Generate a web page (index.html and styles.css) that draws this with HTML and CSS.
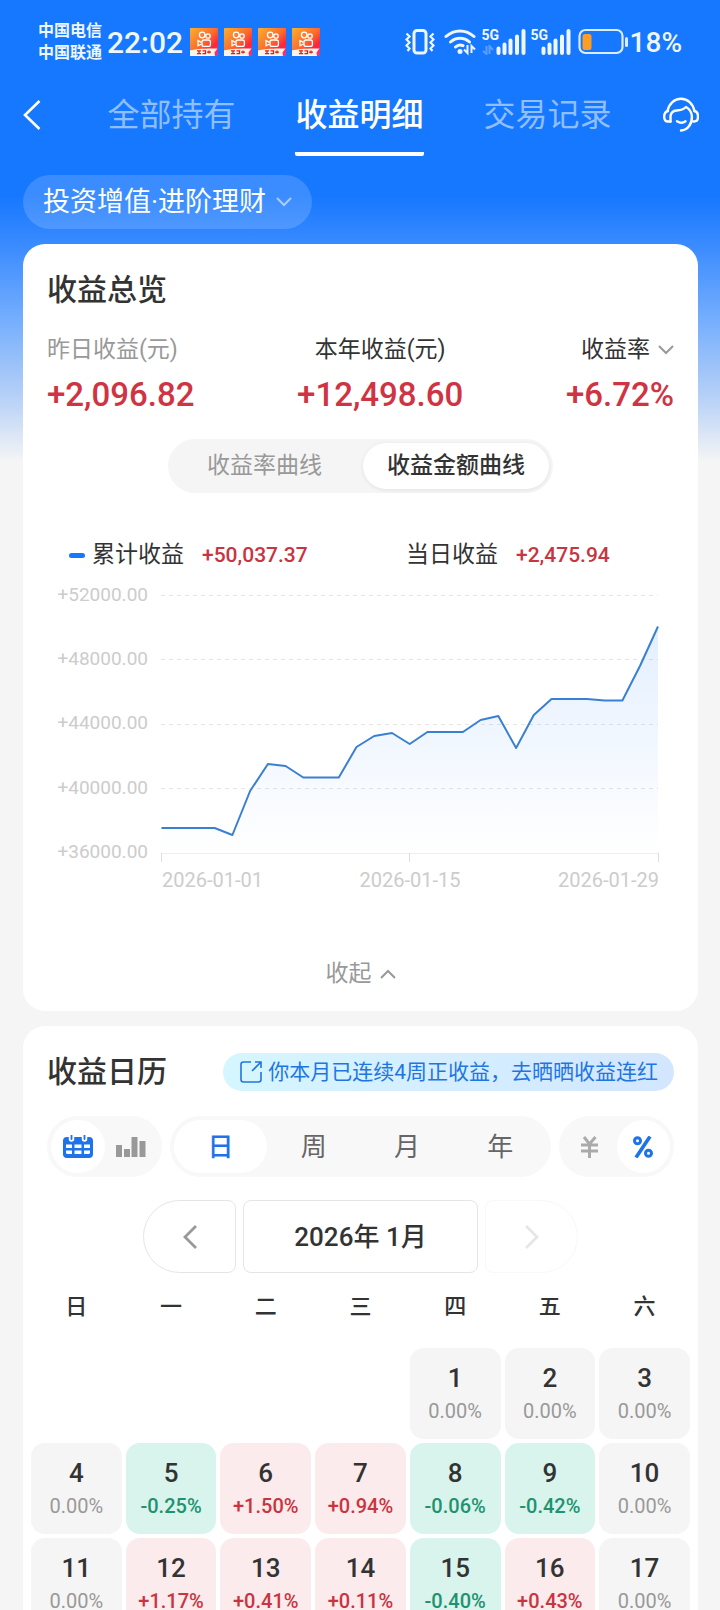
FILE: index.html
```html
<!DOCTYPE html>
<html lang="zh-CN">
<head>
<meta charset="utf-8">
<meta name="viewport" content="width=device-width, initial-scale=1">
<title>收益明细</title>
<link rel="stylesheet" href="styles.css">
</head>
<body>
<svg class="defs" aria-hidden="true">
  <defs>
    <linearGradient id="appBg" x1="0" y1="0" x2="1" y2="1">
      <stop offset="0" stop-color="#fcb02c"/><stop offset="0.5" stop-color="#fb6a2e"/><stop offset="0.75" stop-color="#f9263c"/><stop offset="1" stop-color="#e8359a"/>
    </linearGradient>
    <symbol id="app" viewBox="0 0 28 28">
      <rect width="28" height="28" rx="1" fill="url(#appBg)"/>
      <g fill="none" stroke="#fff" stroke-width="1.3">
        <circle cx="12.2" cy="7" r="2.8"/><circle cx="18" cy="8" r="2.2"/>
        <rect x="12" y="12" width="8.4" height="6.4" rx="2"/>
        <path d="M11.5 14.4 8 12.6v5.2l3.5-1.8"/>
      </g>
      <path d="M0 22.5c5-1.8 18-2.4 27.5-2l-3 4 .5 3.5H0z" fill="#fff3e4"/>
      <path d="M7 22.8h4m-2 0v2.8m-2 0h4m1.5-2.8h3v2.8h-3m4.500-1.400h4m-2-1.800v3.200" fill="none" stroke="#d8201c" stroke-width="1.300"/>
    </symbol>
    <symbol id="down" viewBox="0 0 16 10"><path d="M1 1l7 7 7-7" fill="none" stroke="currentColor" stroke-width="2"/></symbol>
    <symbol id="bars" viewBox="0 0 30 26">
      <path d="M2.500 19.500v4.500M8.500 15.500v8.500M14.500 11.500v12.500M21 7.500v16.500M27.500 2v22" fill="none" stroke="#eef6ff" stroke-width="4" stroke-linecap="round"/>
    </symbol>
  </defs>
</svg>
<div class="app">
  <div class="status">
    <div class="status-side">
      <div class="carriers"><span>中国电信</span><span>中国联通</span></div>
      <time class="clock">22:02</time>
      <div class="notices">
        <svg><use href="#app"/></svg><svg><use href="#app"/></svg><svg><use href="#app"/></svg><svg><use href="#app"/></svg>
      </div>
    </div>
    <div class="status-side">
      <svg class="vibrate" viewBox="0 0 30 28" fill="none" stroke="#eef6ff" stroke-width="2.200">
        <rect x="9" y="2.500" width="12" height="22.500" rx="3" stroke-width="3"/>
        <path d="M1.500 5.500l3 3-3 3 3 3-3 3 3 3-2 2.500M28.500 5.500l-3 3 3 3-3 3 3 3-3 3 2 2.500"/>
      </svg>
      <svg class="wifi" viewBox="0 0 32 28" fill="none" stroke="#eef6ff" stroke-width="3" stroke-linecap="round">
        <path d="M2 8.500c8-7.500 20-7.500 28 0M6.500 14c5.500-5 13.500-5 19 0M11.500 19c2-2 5-2.500 7.500-1.300"/>
        <circle cx="16" cy="23.500" r="2.500" fill="#eef6ff" stroke="none"/>
        <path d="M23.500 17v8l-3.500-3.500M27.500 25v-7l3.500 3.500" stroke-width="2" stroke-linecap="butt"/>
      </svg>
      <div class="signal">
        <span>5G</span>
        <svg class="data" viewBox="0 0 12 10"><path d="M4.500 1v8L1 6M7.500 9V1L11 5" fill="none" stroke="#5c9fff" stroke-width="2"/></svg>
        <svg class="bars"><use href="#bars"/></svg>
      </div>
      <div class="signal signal-b">
        <span>5G</span>
        <svg class="bars"><use href="#bars"/></svg>
      </div>
      <svg class="battery" viewBox="0 0 52 28">
        <rect x="1.500" y="2" width="43" height="23" rx="6" fill="none" stroke="#dcecff" stroke-width="2.200"/>
        <rect x="4.500" y="6" width="9" height="16" rx="2.500" fill="#ff9c22"/>
        <path d="M48.500 10.500v7" stroke="#dcecff" stroke-width="3" stroke-linecap="round"/>
      </svg>
      <span class="charge">18%</span>
    </div>
  </div>

  <header class="nav">
    <button class="icon-btn" type="button" aria-label="返回">
      <svg class="back" viewBox="0 0 18 32"><path d="M16.500 2 2 16l14.500 14" fill="none" stroke="#fff" stroke-width="2.600"/></svg>
    </button>
    <nav class="tabs">
      <a href="#holdings">全部持有</a>
      <a href="#details" class="on" aria-current="page">收益明细</a>
      <a href="#records">交易记录</a>
    </nav>
    <button class="icon-btn" type="button" aria-label="客服">
      <svg class="support" viewBox="0 0 36 36" fill="none" stroke="#fff" stroke-width="2.400" stroke-linecap="round" stroke-linejoin="round">
        <path d="M4.500 14C6 6.500 11.500 1.800 18 1.800S30 6.500 31.500 14"/>
        <path d="M7.500 24.500H5c-2.500 0-3.800-1.800-3.800-4.800S2.500 14.500 5 14"/>
        <path d="M31.500 14c2.500.500 3.500 2.700 3.500 5.700s-1.300 4.800-3.800 4.800h-1"/>
        <path d="M7.500 24.500V19c.500-3.500 2.500-5.200 6-5.500 4.500-.300 7.500-1.500 9.500-3.500 3.500 2 5.700 5.500 5.900 9.500.300 7-4 13.800-10.900 14"/>
        <path d="M14 24.200c3 1.900 6 1.900 8.500 0"/>
      </svg>
    </button>
  </header>

  <button class="filter" type="button">投资增值·进阶理财<svg class="chev"><use href="#down"/></svg></button>

  <main>
    <section class="card overview">
      <h2>收益总览</h2>
      <div class="metrics">
        <div class="metric muted"><p>昨日收益(元)</p><strong>+2,096.82</strong></div>
        <div class="metric center"><p>本年收益(元)</p><strong>+12,498.60</strong></div>
        <div class="metric right"><p>收益率<svg class="chev"><use href="#down"/></svg></p><strong>+6.72%</strong></div>
      </div>
      <div class="switch">
        <button type="button">收益率曲线</button>
        <button type="button" class="on" aria-pressed="true">收益金额曲线</button>
      </div>
      <div class="legend">
        <div><i></i>累计收益<b>+50,037.37</b></div>
        <div>当日收益<b>+2,475.94</b></div>
      </div>
      <svg class="chart" viewBox="0 0 627 329" role="img" aria-label="累计收益曲线">
        <defs>
          <linearGradient id="area" gradientUnits="userSpaceOnUse" x1="0" y1="55" x2="0" y2="282">
            <stop offset="0" stop-color="#1677ff" stop-opacity="0.120"/><stop offset="1" stop-color="#1677ff" stop-opacity="0"/>
          </linearGradient>
        </defs>
        <path class="grid" d="M114 24.500H611M114 88.500H611M114 153.500H611M114 217.500H611M114 282.500H611"/>
        <path class="axis" d="M114 282.500H611"/>
        <path class="ticks" d="M114.500 282v9M362.500 282v9M611.500 282v9"/>
        <path fill="url(#area)" d="M114.500 257H167.700L185.400 264 203.100 220 220.900 193 238.600 195 256.300 206.500H291.800L309.500 176 327.200 165 345 162 362.700 173 380.400 161H415.900L433.600 149 451.300 145 469.100 177 486.800 144 504.500 128H540L557.700 129.500H575.400L593.200 94.500 611 55.500V282H114.500z"/>
        <path class="line" d="M114.500 257H167.700L185.400 264 203.100 220 220.900 193 238.600 195 256.300 206.500H291.800L309.500 176 327.200 165 345 162 362.700 173 380.400 161H415.900L433.600 149 451.300 145 469.100 177 486.800 144 504.500 128H540L557.700 129.500H575.400L593.200 94.500 611 55.500"/>
        <g class="y-labels">
          <text x="101" y="30">+52000.00</text><text x="101" y="94">+48000.00</text><text x="101" y="158">+44000.00</text><text x="101" y="223">+40000.00</text><text x="101" y="287">+36000.00</text>
        </g>
        <g class="x-labels">
          <text x="115" y="316">2026-01-01</text><text x="363" y="316" text-anchor="middle">2026-01-15</text><text x="612" y="316" text-anchor="end">2026-01-29</text>
        </g>
      </svg>
      <button class="fold" type="button">收起<svg class="chev up"><use href="#down"/></svg></button>
    </section>

    <section class="card calendar">
      <div class="cal-head">
        <h2>收益日历</h2>
        <a class="share" href="#share">
          <svg viewBox="0 0 24 24" fill="none" stroke="#1f76e0" stroke-width="1.600"><path d="M12 2H4.500A2.500 2.500 0 0 0 2 4.500v15A2.500 2.500 0 0 0 4.500 22h15a2.500 2.500 0 0 0 2.500-2.500V12M16 2h6v6M22 2l-9 9"/></svg>
          <span>你本月已连续4周正收益，去晒晒收益连红</span></a>
      </div>
      <div class="controls">
        <div class="group small">
          <button type="button" class="on" aria-label="日历视图">
            <svg class="cal-icon" viewBox="0 0 30 24">
              <rect y="2" width="30" height="21" rx="4" fill="#1f73ea"/>
              <path d="M8.500 0v4M21.500 0v4" stroke="#fff" stroke-width="5.500" stroke-linecap="round"/>
              <path d="M8.500 0v4M21.500 0v4" stroke="#1f73ea" stroke-width="1.800" stroke-linecap="round"/>
              <path fill="#fff" d="M3 9.500h6v3.500H3zM11.500 9.500h7v3.500h-7zM21 9.500h6v3.500h-6zM3 15.500h6V19H4.500Q3 19 3 17.500zM11.500 15.500h7V19h-7zM21 15.500h6v2q0 1.500-1.500 1.500H21z"/>
            </svg>
          </button>
          <button type="button" aria-label="柱状图视图">
            <svg class="bar-icon" viewBox="0 0 30 20" fill="#999"><path d="M0 8h6v12H0zM8 12h6v8H8zM15.500 0h6v20h-6zM23.500 4h6v16h-6z"/></svg>
          </button>
        </div>
        <div class="group wide">
          <button type="button" class="on">日</button><button type="button">周</button><button type="button">月</button><button type="button">年</button>
        </div>
        <div class="group small">
          <button type="button" aria-label="金额">
            <svg class="unit" viewBox="0 0 20 22" fill="none" stroke="#aaa" stroke-width="3"><path d="M4 1l5.500 7L15.500 1M1 9h17M1 15h17M9.500 8v14"/></svg>
          </button>
          <button type="button" class="on" aria-label="百分比">
            <svg class="unit" viewBox="0 0 20 22" fill="none" stroke="#1f73ea" stroke-width="3"><circle cx="4.500" cy="4.800" r="3"/><circle cx="15.500" cy="17.200" r="3"/><path d="M17 .500 3 21.500" stroke-width="3.600"/></svg>
          </button>
        </div>
      </div>
      <div class="month">
        <button type="button" class="prev" aria-label="上个月"><svg viewBox="0 0 14 24"><path d="M13 1 2 12l11 11" fill="none" stroke="#999" stroke-width="2.800"/></svg></button>
        <button type="button" class="now">2026年 1月</button>
        <button type="button" class="next" aria-label="下个月" disabled><svg viewBox="0 0 14 24"><path d="M1 1l11 11L1 23" fill="none" stroke="#e6e6e6" stroke-width="2.800"/></svg></button>
      </div>
      <table>
        <thead><tr><th>日</th><th>一</th><th>二</th><th>三</th><th>四</th><th>五</th><th>六</th></tr></thead>
        <tbody>
          <tr>
            <td class="empty"></td><td class="empty"></td><td class="empty"></td><td class="empty"></td>
            <td><b>1</b><span>0.00%</span></td><td><b>2</b><span>0.00%</span></td><td><b>3</b><span>0.00%</span></td>
          </tr>
          <tr>
            <td><b>4</b><span>0.00%</span></td><td class="loss"><b>5</b><span>-0.25%</span></td><td class="gain"><b>6</b><span>+1.50%</span></td><td class="gain"><b>7</b><span>+0.94%</span></td><td class="loss"><b>8</b><span>-0.06%</span></td><td class="loss"><b>9</b><span>-0.42%</span></td><td><b>10</b><span>0.00%</span></td>
          </tr>
          <tr>
            <td><b>11</b><span>0.00%</span></td><td class="gain"><b>12</b><span>+1.17%</span></td><td class="gain"><b>13</b><span>+0.41%</span></td><td class="gain"><b>14</b><span>+0.11%</span></td><td class="loss"><b>15</b><span>-0.40%</span></td><td class="gain"><b>16</b><span>+0.43%</span></td><td><b>17</b><span>0.00%</span></td>
          </tr>
        </tbody>
      </table>
    </section>
  </main>
</div>
</body>
</html>
```
FILE: styles.css
```css
* { box-sizing: border-box; }
body, h2, p { margin: 0; }
body {
  font-family: Roboto, "Noto Sans CJK SC", sans-serif;
  color: #333;
  background: #f5f5f5;
}
button { font: inherit; color: inherit; border: 0; padding: 0; background: none; }
a { color: inherit; text-decoration: none; }
svg { display: block; flex: none; }
.defs { position: absolute; width: 0; height: 0; }

.app {
  height: 100vh;
  overflow-y: auto;
  scrollbar-width: none;
  background: linear-gradient(#1677ff 0, #1677ff 195px, #3a8bff 245px, #75aefd 320px, #b9d2f7 400px, #f5f5f5 462px) no-repeat #f5f5f5;
}

/* status bar */
.status {
  height: 84px;
  padding: 0 38px;
  display: flex;
  justify-content: space-between;
  align-items: center;
  color: #eef6ff;
}
.status-side { display: flex; align-items: center; }
.carriers { display: flex; flex-direction: column; font-size: 16px; line-height: 22px; font-weight: 700; }
.clock { font-size: 30px; font-weight: 500; margin: 0 7px 0 5px; }
.notices { display: flex; gap: 6px; }
.notices svg { width: 28px; height: 28px; }
.vibrate { width: 30px; height: 28px; margin-right: 9px; }
.wifi { width: 32px; height: 28px; margin-right: 6px; }
.signal { display: grid; grid-template: 13px 13px / 14px 28px; width: 42px; margin-right: 7px; }
.signal-b { width: 38px; margin-right: 9px; grid-template-columns: 10px 28px; }
.signal span { grid-area: 1 / 1; font-size: 14px; line-height: 13px; font-weight: 700; }
.signal .data { grid-area: 2 / 1; width: 12px; height: 10px; align-self: end; }
.signal .bars { grid-area: 1 / 2 / 3 / 3; width: 30px; height: 26px; }
.battery { width: 52px; height: 28px; }
.charge { font-size: 28px; font-weight: 500; }

/* navigation */
.nav { display: flex; justify-content: space-between; align-items: flex-start; padding: 7px 21px 0 23px; color: #fff; }
.icon-btn { height: 48px; display: flex; align-items: center; }
.back { width: 18px; height: 32px; }
.support { width: 36px; height: 36px; }
.tabs { display: flex; gap: 60px; margin-left: 15px; font-size: 32px; line-height: 48px; }
.tabs a { padding-bottom: 13px; color: #8fbfff; border-bottom: 4px solid transparent; }
.tabs .on { color: #fff; font-weight: 500; border-bottom-color: #fff; border-radius: 2px; }

.chev { width: 16px; height: 10px; color: #999; margin-left: 8px; }
.filter {
  display: flex;
  align-items: center;
  height: 54px;
  margin: 19px 0 0 23px;
  padding: 0 20px;
  border-radius: 27px;
  background: rgba(255, 255, 255, 0.160);
  color: #fff;
  font-size: 27px;
  line-height: 36px;
}
.filter .chev { color: #a9cdff; margin-left: 10px; }

/* cards */
main { display: flex; flex-direction: column; gap: 15px; padding: 15px 22px 15px 23px; }
.card { background: #fff; border-radius: 22px; padding: 26px 24px 21px; }
h2 { font-size: 30px; line-height: 40px; font-weight: 500; }

.metrics { display: flex; justify-content: space-between; margin-top: 24px; }
.metric p { display: flex; align-items: center; font-size: 23px; line-height: 32px; }
.metric strong { display: block; margin-top: 9px; font-size: 33px; line-height: 40px; font-weight: 500; color: #d03342; }
.muted p { color: #999; }
.center p { justify-content: center; }
.right p { justify-content: flex-end; }

.switch {
  display: flex;
  width: fit-content;
  margin: 24px auto 0;
  padding: 4px;
  border-radius: 27px;
  background: #f5f5f5;
  font-size: 23px;
  line-height: 46px;
  color: #999;
}
.switch button { border-radius: 23px; padding: 0 24px; }
.switch button:first-child { padding: 0 41px 0 35px; }
.switch .on { background: #fff; color: #333; font-weight: 500; box-shadow: 0 1px 4px rgba(0, 0, 0, 0.080); }

.legend { display: grid; grid-template-columns: 337fr 268fr; margin-top: 46px; padding-left: 22px; font-size: 23px; line-height: 32px; }
.legend div { display: flex; align-items: center; }
.legend i { width: 16px; height: 5px; margin-right: 7px; border-radius: 3px; background: #1677ff; }
.legend b { margin-left: 18px; font-size: 21px; font-weight: 500; color: #c93440; }

.chart { width: 100%; height: auto; }
.grid { fill: none; stroke: #e6e6e6; stroke-dasharray: 4 4; }
.axis { fill: none; stroke: #eee; }
.ticks { fill: none; stroke: #ddd; }
.line { fill: none; stroke: #3a80d2; stroke-width: 2; stroke-linejoin: round; }
.y-labels, .x-labels { fill: #ccc; font-size: 20px; }
.y-labels { font-size: 19px; text-anchor: end; }

.fold { display: flex; align-items: center; margin: 58px auto 0; font-size: 23px; line-height: 32px; color: #999; }
.up { transform: rotate(180deg); }

/* calendar */
.cal-head { display: flex; justify-content: space-between; align-items: center; }
.share {
  display: flex;
  align-items: center;
  gap: 5px;
  height: 38px;
  padding: 0 16px;
  border-radius: 19px;
  background: linear-gradient(90deg, #d5f6ff, #d3e6ff);
  color: #1f76e0;
  font-size: 21px;
  line-height: 30px;
}
.share svg { width: 24px; height: 24px; }

.controls { display: flex; gap: 8px; margin-top: 24px; }
.group { display: flex; height: 61px; padding: 4px; border-radius: 31px; background: #f8f8f8; font-size: 26px; line-height: 36px; color: #666; }
.group button { flex: 1; display: flex; align-items: center; justify-content: center; border-radius: 27px; }
.group .on { background: #fff; color: #1f73ea; font-weight: 500; }
.small { width: 115px; }
.wide { flex: 1; }
.unit { width: 20px; height: 22px; }
.cal-icon { width: 30px; height: 24px; }
.bar-icon { width: 30px; height: 20px; }

.month { display: flex; justify-content: center; gap: 7px; margin-top: 23px; }
.month button { display: flex; align-items: center; justify-content: center; width: 93px; height: 73px; border: 1px solid #e5e5e5; border-radius: 8px; }
.month svg { width: 14px; height: 24px; }
.month .prev { border-radius: 37px 8px 8px 37px; }
.month .next { border-radius: 8px 37px 37px 8px; border-color: #f8f8f8; }
.month .now { width: 235px; font-size: 26px; font-weight: 500; line-height: 36px; }

table { width: calc(100% + 40px); margin: 4px -20px 0; table-layout: fixed; border-collapse: separate; border-spacing: 4px; }
th { padding: 11px 0 22px; font-size: 22px; line-height: 30px; font-weight: 500; }
td { height: 91px; padding: 0; border-radius: 14px; background: #f5f5f5; text-align: center; vertical-align: middle; color: #999; }
td b { display: block; font-size: 26px; line-height: 34px; font-weight: 500; color: #333; }
td span { display: block; font-size: 20px; line-height: 32px; }
.empty { background: none; }
.gain { background: #fcebec; color: #c93440; }
.loss { background: #d8f4ec; color: #1f9270; }
.gain span, .loss span { font-weight: 500; }
```
